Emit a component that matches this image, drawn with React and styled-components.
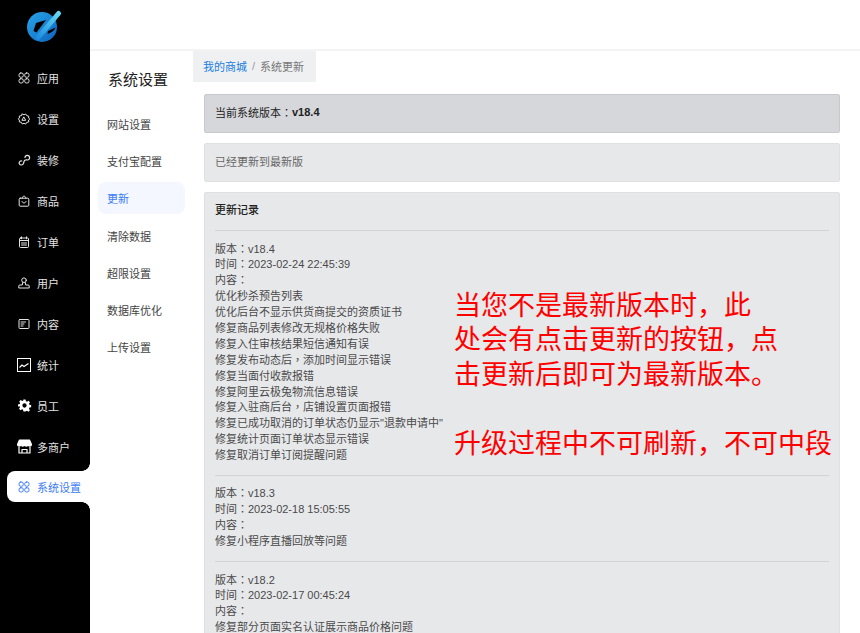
import React from "react";
import styled, { createGlobalStyle } from "styled-components";

const Global = createGlobalStyle`
  html, body { margin: 0; padding: 0; height: 100%; overflow: hidden; background: #fff; }
  body { font-family: "Liberation Sans", "Noto Sans CJK SC", sans-serif; }
  #root { height: 100%; }
  * { box-sizing: border-box; }
`;

const Shell = styled.div`
  position: relative;
  display: flex;
  width: 860px;
  height: 633px;
  overflow: hidden;
`;
const Sidebar = styled.nav`
  flex: 0 0 90px;
  background: #000;
  display: flex;
  flex-direction: column;
`;
const LogoBox = styled.div`
  flex: 0 0 57px;
  display: flex;
  align-items: center;
  justify-content: center;
  padding: 0 2px 3px 0;
`;
const SideItem = styled.div`
  position: relative;
  flex: 0 0 ${p => (p.$active ? "31px" : "41px")};
  margin: ${p => (p.$active ? "4px 0 0 7px" : "0")};
  padding-left: ${p => (p.$active ? "10px" : "17px")};
  display: flex;
  align-items: center;
  font-size: 11px;
  color: ${p => (p.$active ? "#3b7cf5" : "#e4e4e4")};
  background: ${p => (p.$active ? "#fff" : "transparent")};
  border-radius: ${p => (p.$active ? "8px 0 0 8px" : "0")};
  ${p =>
    p.$active &&
    `
    &::before, &::after {
      content: "";
      position: absolute;
      right: 0;
      width: 8px;
      height: 8px;
    }
    &::before { top: -8px; background: radial-gradient(circle at 0 0, #000 7.5px, #fff 8px); }
    &::after { bottom: -8px; background: radial-gradient(circle at 0 100%, #000 7.5px, #fff 8px); }
  `}
`;
const IconSlot = styled.span`
  flex: 0 0 14px;
  width: 14px;
  height: 14px;
  margin-right: 6px;
  display: flex;
  align-items: center;
  justify-content: center;
  svg { display: block; overflow: visible; }
`;

const SubNav = styled.aside`
  flex: 0 0 103px;
  margin-top: 50px;
  padding: 20px 8px 0 8px;
`;
const SubTitle = styled.div`
  font-size: 15px;
  line-height: 20px;
  color: #222;
  padding-left: 10px;
  margin-bottom: 18px;
`;
const SubItem = styled.div`
  height: 32px;
  margin-bottom: 5.2px;
  padding-left: 9px;
  display: flex;
  align-items: center;
  font-size: 11px;
  border-radius: 8px;
  color: ${p => (p.$active ? "#3b7cf5" : "#444")};
  background: ${p => (p.$active ? "#f4f7ff" : "transparent")};
`;

const Main = styled.main`
  flex: 1;
  min-width: 0;
  display: flex;
  flex-direction: column;
`;
const TopBar = styled.header`
  position: absolute;
  top: 49px;
  left: 90px;
  right: 0;
  height: 2px;
  background: #f3f3f3;
`;
const Crumbs = styled.div`
  flex: 0 0 32px;
  align-self: flex-start;
  margin-top: 50px;
  width: 123px;
  padding-left: 10px;
  background: #eef0f2;
  display: flex;
  align-items: center;
  font-size: 11px;
  color: #777;
`;
const CrumbLink = styled.span`
  color: #1a7ee0;
`;
const CrumbSep = styled.span`
  margin: 0 5px;
  color: #999;
`;
const Content = styled.div`
  flex: 0 0 auto;
  padding: 12px 20px 0 11px;
  display: flex;
  flex-direction: column;
  gap: 10px;
`;
const Bar = styled.div`
  flex: 0 0 39px;
  padding: 0 10px 3px;
  display: flex;
  align-items: center;
  font-size: 11px;
  border-radius: 2px;
  border: 1px solid ${p => (p.$strong ? "#c8c9cc" : "#dfe0e2")};
  background: ${p => (p.$strong ? "#d6d7da" : "#e7e8ea")};
  color: ${p => (p.$strong ? "#222" : "#666")};
  b { font-weight: 700; }
`;
const LogCard = styled.section`
  padding: 0 10px;
  background: #e7e8ea;
  border: 1px solid #dfe0e2;
  border-radius: 2px;
  font-size: 11px;
  line-height: 15.9px;
  color: #4a4a4a;
`;
const LogTitle = styled.div`
  height: 38px;
  padding-bottom: 2px;
  display: flex;
  align-items: center;
  color: #222;
  font-weight: 500;
  border-bottom: 1px solid #d2d3d5;
`;
const LogEntry = styled.div`
  padding: 10.5px 0 11px;
  border-bottom: 1px solid #d2d3d5;
  &:first-of-type { padding-top: 10px; }
`;
const LogLine = styled.div`
  height: 15.9px;
  white-space: nowrap;
`;
const Punct = styled.span`
  font-family: "Noto Sans CJK TC", sans-serif;
  line-height: 0;
`;
const Note = styled.div`
  position: absolute;
  left: 454px;
  top: 287px;
  font-family: "Noto Sans CJK SC", sans-serif;
  font-size: 27px;
  font-weight: 400;
  line-height: 34.4px;
  color: #f00;
  white-space: nowrap;
`;

const Logo = () => (
  <svg width="38" height="38" viewBox="25 8 38 38">
    <defs>
      <linearGradient id="lg" x1="0" y1="0" x2="1" y2="1">
        <stop offset="0" stopColor="#2aa6ea" />
        <stop offset="1" stopColor="#0c62bd" />
      </linearGradient>
      <linearGradient id="lg2" x1="0" y1="1" x2="1" y2="0">
        <stop offset="0" stopColor="#1e8fe0" />
        <stop offset="1" stopColor="#62d6f2" />
      </linearGradient>
    </defs>
    <circle cx="42" cy="27" r="15" fill="url(#lg)" />
    <path d="M36 23l10-3-9.500 12.500-3-1.500zM48 31l7.500-3.500c-1 3-3.500 5-8 6.500z" fill="#000" />
    <path d="M38 37.500L58.500 13.500" fill="none" stroke="url(#lg2)" strokeWidth="5" strokeLinecap="round" />
  </svg>
);

const S = { fill: "none", stroke: "currentColor", strokeWidth: 1, strokeLinecap: "round", strokeLinejoin: "round" };
const Svg = ({ size = 12, children }) => (
  <svg width={size} height={size} viewBox="0 0 12 12" {...S}>{children}</svg>
);
const AppsIcon = () => (
  <Svg>
    <rect x="1" y="1" width="4.300" height="4.300" rx="1.800" /><rect x="6.700" y="1" width="4.300" height="4.300" rx="1.800" />
    <rect x="1" y="6.700" width="4.300" height="4.300" rx="1.800" /><rect x="6.700" y="6.700" width="4.300" height="4.300" rx="1.800" />
  </Svg>
);
const SettingIcon = () => (
  <Svg>
    <path d="M4.300 1l1.700.8L7.700 1l1 1.700 2 .4-.1 2L11.800 6l-1.200 1 .1 2-2 .4-1 1.700L6 10.300 4.300 11l-1-1.700-2-.4.1-2L.2 6l1.200-.9-.1-2 2-.4z" />
    <path d="M6 4.200L7.700 7.300H4.300z" />
  </Svg>
);
const DecorIcon = () => (
  <Svg>
    <path d="M7 3.500A2.300 2.300 0 1 1 9.500 6C8 6 6.500 5.500 6 7.500c-.3 2.500-1 3.500-2.700 3.500C1.500 11 .8 9.300 1.300 8.200 1.700 7.300 2.800 6.800 3.800 7" strokeWidth="1.200" />
  </Svg>
);
const GoodsIcon = () => (
  <Svg>
    <rect x="1.200" y="3.200" width="9.600" height="8" rx="1" /><path d="M4.200 3.200C4.200.4 7.800.4 7.800 3.200" /><path d="M4 6.500c.5 2 3.500 2 4 0" />
  </Svg>
);
const OrderIcon = () => (
  <Svg>
    <rect x="1.500" y="2" width="9" height="9.500" rx="1" />
    <path d="M3.500.8v2M8.500.8v2M1.500 4.500h9M3.500 7h5M3.500 9h5" />
  </Svg>
);
const UserIcon = () => (
  <Svg>
    <circle cx="6" cy="3.200" r="2.300" />
    <path d="M4.700 5.500L4.300 8H1.800a1 1 0 0 0-1 1v2h10.400V9a1 1 0 0 0-1-1H7.700l-.4-2.500" />
  </Svg>
);
const ContentIcon = () => (
  <Svg>
    <rect x="1" y="1.500" width="10" height="9" rx=".8" />
    <path d="M3 4h4.500M3 6h3M3 8h2" />
  </Svg>
);
const StatsIcon = () => (
  <svg width="14" height="14" viewBox="0 0 14 14" fill="none" stroke="#fff" strokeWidth="1">
    <rect x=".5" y=".5" width="13" height="13" />
    <path d="M2.500 9.500l2.500-2.500 2 1.500 4.500-3" strokeWidth="1.200" />
  </svg>
);
const StaffIcon = () => (
  <svg width="13" height="13" viewBox="0 0 24 24">
    <path fill="#fff" fillRule="evenodd" d="M10 1h4l.6 3.200 2 .8L19.300 3.200l2.800 2.800-1.800 2.700.8 2 3.200.6v4l-3.200.6-.8 2 1.800 2.700-2.800 2.800-2.700-1.800-2 .8L14 23h-4l-.6-3.200-2-.8-2.700 1.800-2.800-2.800 1.800-2.700-.8-2L0 14v-4l3.200-.6.8-2L2.200 4.700 5 1.900 7.700 3.700l2-.8zM12 8a4 4 0 1 0 0 8 4 4 0 0 0 0-8z" />
  </svg>
);
const StoreIcon = () => (
  <svg width="15" height="15" viewBox="0 0 15 15" fill="none" stroke="#fff" strokeWidth="1.200" strokeLinejoin="round">
    <path d="M2.500 1h10l2 4.500c-.3 2.200-3 2.200-3.500 0-.5 2.200-3 2.200-3.500 0-.5 2.200-3 2.200-3.500 0-.5 2.200-3.200 2.200-3.500 0z" fill="#fff" />
    <path d="M2 8v6h11V8M5 14v-3.500h5V14" />
  </svg>
);

const menu = [
  ["应用", <AppsIcon />],
  ["设置", <SettingIcon />],
  ["装修", <DecorIcon />],
  ["商品", <GoodsIcon />],
  ["订单", <OrderIcon />],
  ["用户", <UserIcon />],
  ["内容", <ContentIcon />],
  ["统计", <StatsIcon />],
  ["员工", <StaffIcon />],
  ["多商户", <StoreIcon />],
];
const subs = ["网站设置", "支付宝配置", "更新", "清除数据", "超限设置", "数据库优化", "上传设置"];
const logs = [
  ["版本：v18.4", "时间：2023-02-24 22:45:39", "内容：", "优化秒杀预告列表", "优化后台不显示供货商提交的资质证书", "修复商品列表修改无规格价格失败", "修复入住审核结果短信通知有误", "修复发布动态后，添加时间显示错误", "修复当面付收款报错", "修复阿里云极兔物流信息错误", "修复入驻商后台，店铺设置页面报错", "修复已成功取消的订单状态仍显示\"退款申请中\"", "修复统计页面订单状态显示错误", "修复取消订单订阅提醒问题"],
  ["版本：v18.3", "时间：2023-02-18 15:05:55", "内容：", "修复小程序直播回放等问题"],
  ["版本：v18.2", "时间：2023-02-17 00:45:24", "内容：", "修复部分页面实名认证展示商品价格问题"],
];

// The reference centres full-width punctuation in its cell, as the TC cut does.
const withPunct = text =>
  text.split(/([：，])/).map((part, i) => (i % 2 ? <Punct key={i}>{part}</Punct> : part));

export default function App() {
  return (
    <Shell>
      <Global />
      <Sidebar>
        <LogoBox><Logo /></LogoBox>
        {menu.map(([label, icon]) => (
          <SideItem key={label}><IconSlot>{icon}</IconSlot>{label}</SideItem>
        ))}
        <SideItem $active><IconSlot><AppsIcon /></IconSlot>系统设置</SideItem>
      </Sidebar>
      <TopBar />
      <SubNav>
        <SubTitle>系统设置</SubTitle>
        {subs.map(s => <SubItem key={s} $active={s === "更新"}>{s}</SubItem>)}
      </SubNav>
      <Main>
        <Crumbs><CrumbLink>我的商城</CrumbLink><CrumbSep>/</CrumbSep>系统更新</Crumbs>
        <Content>
          <Bar $strong>当前系统版本<Punct>：</Punct><b>v18.4</b></Bar>
          <Bar>已经更新到最新版</Bar>
          <LogCard>
            <LogTitle>更新记录</LogTitle>
            {logs.map(entry => (
              <LogEntry key={entry[0]}>
                {entry.map(line => <LogLine key={line}>{withPunct(line)}</LogLine>)}
              </LogEntry>
            ))}
          </LogCard>
        </Content>
      </Main>
      <Note>
        当您不是最新版本时，此<br />
        处会有点击更新的按钮，点<br />
        击更新后即可为最新版本。<br />
        <br />
        升级过程中不可刷新，不可中段
      </Note>
    </Shell>
  );
}
